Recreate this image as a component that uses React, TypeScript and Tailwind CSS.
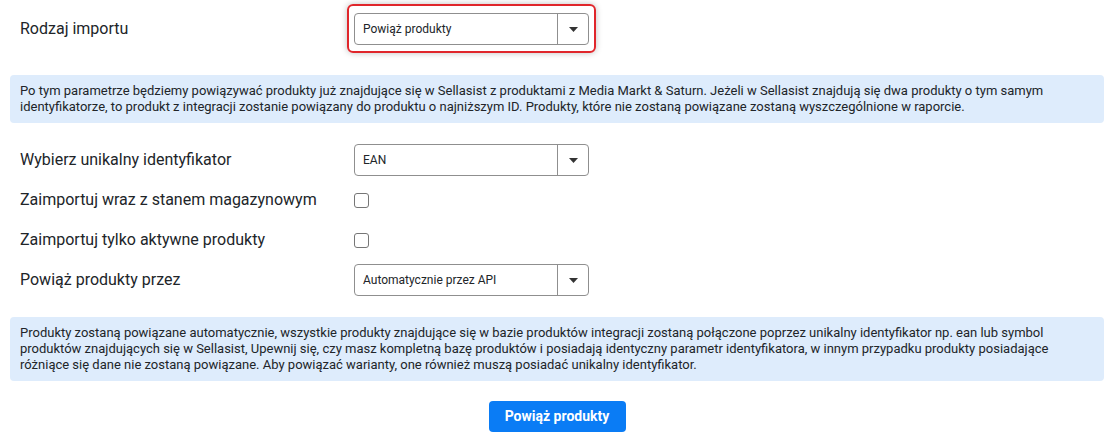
import React from "react";

function Select({ value }: { value: string }) {
  return (
    <div className="flex h-8 w-[235px] items-stretch rounded-[4px] border border-[#8f8f8f] bg-white">
      <div className="flex flex-1 items-center pl-[8px] text-[12px] text-[#212529]">{value}</div>
      <div className="flex w-[31px] items-center justify-center border-l border-[#8f8f8f]">
        <svg width="9" height="5" viewBox="0 0 9 5">
          <path d="M0 0h9L4.5 5z" fill="#333" />
        </svg>
      </div>
    </div>
  );
}

function Checkbox() {
  return <div className="h-[15px] w-[15px] rounded-[3px] border border-[#767676] bg-white" />;
}

function Row({ label, children }: { label: string; children: React.ReactNode }) {
  return (
    <div className="flex h-8 items-center">
      <div className="w-[344px] pl-[10px] text-[16px] text-[#212529]">{label}</div>
      {children}
    </div>
  );
}

export default function App() {
  return (
    <div
      className="min-h-screen bg-white px-[10px] pt-[4px]"
      style={{ fontFamily: "Roboto, 'Liberation Sans', sans-serif" }}
    >
      {/* Rodzaj importu */}
      <div className="flex items-center">
        <div className="w-[337px] pl-[10px] text-[16px] text-[#212529]">Rodzaj importu</div>
        <div className="rounded-[6px] border-2 border-[#e0262b] px-[5px] pt-[7px] pb-[6px] shadow-[0_0_6px_rgba(0,0,0,0.25)]">
          <Select value="Powiąż produkty" />
        </div>
      </div>

      <div className="mt-[22px] rounded-[4px] bg-[#deecfc] px-[10px] py-[8px] text-[13px] leading-[16px] text-[#212529]">
        Po tym parametrze będziemy powiązywać produkty już znajdujące się w Sellasist z produktami z Media Markt &amp; Saturn. Jeżeli w Sellasist znajdują się dwa produkty o tym samym identyfikatorze, to produkt z integracji zostanie powiązany do produktu o najniższym ID. Produkty, które nie zostaną powiązane zostaną wyszczególnione w raporcie.
      </div>

      <div className="mt-[21px] flex flex-col gap-2">
        <Row label="Wybierz unikalny identyfikator">
          <Select value="EAN" />
        </Row>
        <Row label="Zaimportuj wraz z stanem magazynowym">
          <Checkbox />
        </Row>
        <Row label="Zaimportuj tylko aktywne produkty">
          <Checkbox />
        </Row>
        <Row label="Powiąż produkty przez">
          <Select value="Automatycznie przez API" />
        </Row>
      </div>

      <div className="mt-[21px] rounded-[4px] bg-[#deecfc] px-[10px] py-[8px] text-[13px] leading-[16px] text-[#212529]">
        Produkty zostaną powiązane automatycznie, wszystkie produkty znajdujące się w bazie produktów integracji zostaną połączone poprzez unikalny identyfikator np. ean lub symbol produktów znajdujących się w Sellasist, Upewnij się, czy masz kompletną bazę produktów i posiadają identyczny parametr identyfikatora, w innym przypadku produkty posiadające różniące się dane nie zostaną powiązane. Aby powiązać warianty, one również muszą posiadać unikalny identyfikator.
      </div>

      <div className="mt-5 flex justify-center">
        <button className="h-[31px] w-[137px] rounded-[4px] bg-[#0a7cf5] text-[14px] font-bold text-white">
          Powiąż produkty
        </button>
      </div>
    </div>
  );
}
